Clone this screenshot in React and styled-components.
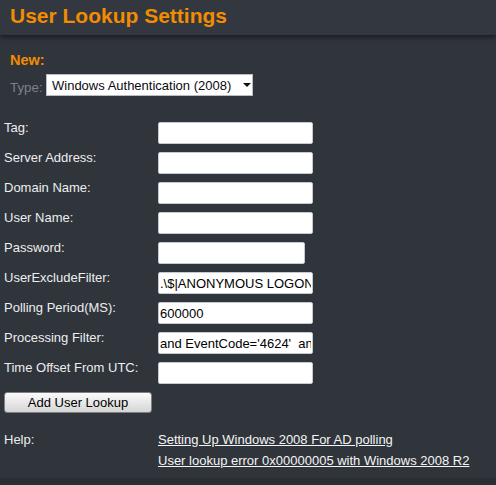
import React from 'react';
import styled, { createGlobalStyle } from 'styled-components';

const GlobalStyle = createGlobalStyle`
  html, body {
    margin: 0;
    padding: 0;
    background: #2b2e34;
    font-family: "Liberation Sans", Arial, sans-serif;
    font-size: 13px;
  }
`;

const Page = styled.div`
  min-height: 478px;
  background: #30343b;
`;

const Header = styled.div`
  height: 35px;
  background: #33373f;
  box-shadow: 0 2px 5px rgba(0, 0, 0, 0.5);
  padding-left: 10px;
  position: relative;
`;

const Title = styled.h1`
  margin: 0;
  font-size: 21px;
  line-height: 31px;
  font-weight: bold;
  color: #f28c00;
`;

const NewSection = styled.div`
  padding: 17px 10px 0;
`;

const SectionTitle = styled.div`
  font-size: 14.5px;
  line-height: 16px;
  font-weight: bold;
  color: #f28c00;
`;

const TypeRow = styled.div`
  display: flex;
  align-items: center;
  margin-top: 6px;
  height: 22px;
`;

const TypeLabel = styled.label`
  width: 36px;
  color: #7d818a;
  font-size: 13.33px;
  line-height: 15px;
  padding-top: 5px;
`;

const SelectWrap = styled.div`
  position: relative;
  width: 207px;
  height: 22px;
`;

const Select = styled.select`
  appearance: none;
  width: 100%;
  height: 22px;
  box-sizing: border-box;
  border: 1px solid #b8bcc4;
  background: #fff;
  color: #0a0a14;
  font-family: inherit;
  font-size: 13px;
  padding: 0 0 0 5px;
  outline: none;
`;

const Arrow = styled.span`
  position: absolute;
  left: 197px;
  top: 9px;
  width: 0;
  height: 0;
  border-left: 4px solid transparent;
  border-right: 4px solid transparent;
  border-top: 4px solid #111;
  pointer-events: none;
`;

const Form = styled.div`
  margin-top: 24px;
`;

const Row = styled.div`
  display: grid;
  grid-template-columns: 158px 1fr;
  height: 30px;
`;

const Label = styled.label`
  padding-left: 4px;
  line-height: ${p => p.$lh || 16}px;
  color: #eceef0;
`;

const Input = styled.input`
  margin-top: 2px;
  width: ${p => p.$w || 155}px;
  height: 22px;
  box-sizing: border-box;
  border: 1px solid #c4c9d2;
  border-radius: 2px;
  background: #fff;
  color: #000;
  font-family: inherit;
  font-size: 13px;
  padding: 0 1px;
  outline: none;
`;

const Button = styled.button`
  margin: 2px 0 0 4px;
  width: 148px;
  height: 21px;
  border: 1px solid #7e8084;
  border-radius: 3px;
  background: linear-gradient(#fbfbfb, #e6e6e6 55%, #d6d6d6);
  color: #000;
  font-family: inherit;
  font-size: 13px;
  padding: 0;
`;

const Help = styled.div`
  display: grid;
  grid-template-columns: 158px 1fr;
  margin-top: 16px;
`;

const Links = styled.div`
  display: flex;
  flex-direction: column;
`;

const Link = styled.a`
  color: #f4f5f6;
  line-height: 21px;
  text-decoration: underline;
`;

const fields = [
  { label: 'Tag:' },
  { label: 'Server Address:' },
  { label: 'Domain Name:' },
  { label: 'User Name:' },
  { label: 'Password:', type: 'password', width: 147 },
  { label: 'UserExcludeFilter:', value: '.\\$|ANONYMOUS LOGON|LOCAL SERVICE' },
  { label: 'Polling Period(MS):', value: '600000' },
  { label: 'Processing Filter:', value: "and EventCode='4624'  and LogonType=3" },
  { label: 'Time Offset From UTC:' },
];

export default function App() {
  return (
    <>
      <GlobalStyle />
      <Page>
        <Header>
          <Title>User Lookup Settings</Title>
        </Header>
        <NewSection>
          <SectionTitle>New:</SectionTitle>
          <TypeRow>
            <TypeLabel>Type:</TypeLabel>
            <SelectWrap>
              <Select defaultValue="win2008">
                <option value="win2008">Windows Authentication (2008)</option>
              </Select>
              <Arrow />
            </SelectWrap>
          </TypeRow>
        </NewSection>
        <Form>
          {fields.map(f => (
            <Row key={f.label}>
              <Label>{f.label}</Label>
              <div>
                <Input type={f.type || 'text'} $w={f.width} defaultValue={f.value || ''} />
              </div>
            </Row>
          ))}
          <Button>Add User Lookup</Button>
          <Help>
            <Label $lh={21}>Help:</Label>
            <Links>
              <Link href="#">Setting Up Windows 2008 For AD polling</Link>
              <Link href="#">User lookup error 0x00000005 with Windows 2008 R2</Link>
            </Links>
          </Help>
        </Form>
      </Page>
    </>
  );
}
